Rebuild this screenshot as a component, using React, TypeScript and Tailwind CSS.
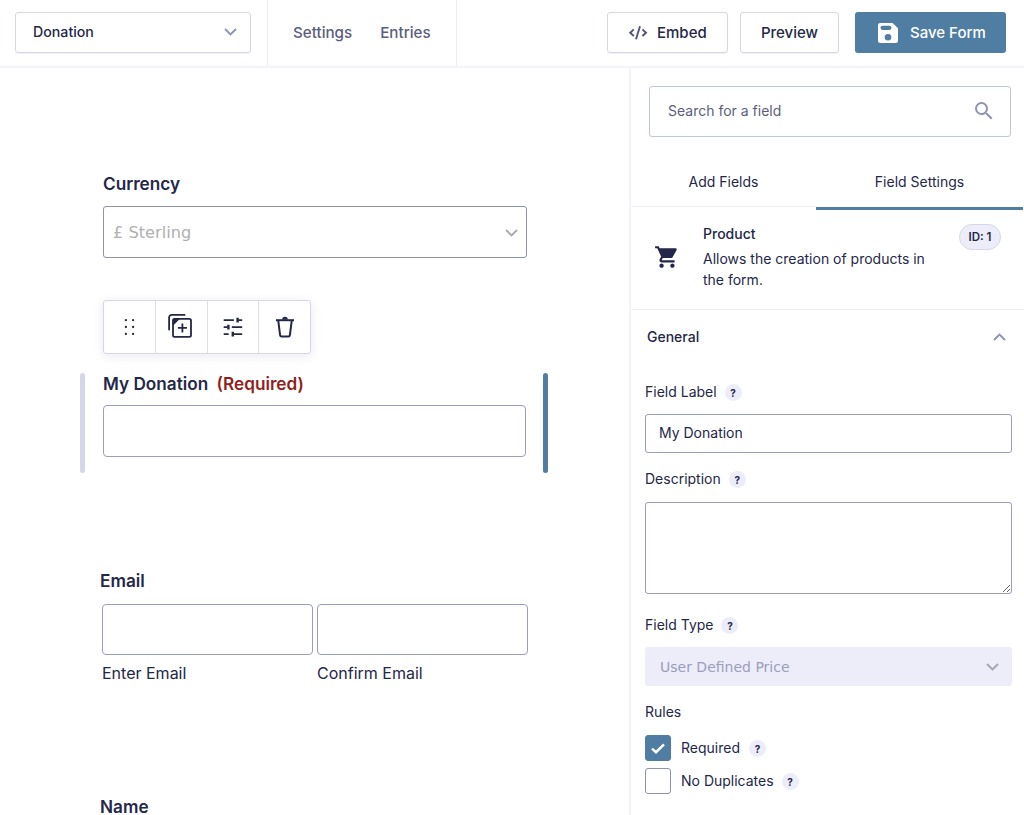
import React, { useState } from 'react';
import { MdSearch, MdShoppingCart } from 'react-icons/md';

interface ChevronProps {
  className?: string;
  up?: boolean;
}

function Chevron({ className, up = false }: ChevronProps) {
  return (
    <svg
      width="13"
      height="8"
      viewBox="0 0 13 8"
      fill="none"
      stroke="currentColor"
      strokeWidth="1.9"
      className={className}
    >
      <path d={up ? 'M1 7l5.5-5.4L12 7' : 'M1 1l5.5 5.4L12 1'} />
    </svg>
  );
}

function CodeIcon() {
  return (
    <svg width="20" height="16" viewBox="0 0 20 16" fill="none" stroke="#54527f" strokeWidth="1.9" className="mb-px shrink-0">
      <path d="M5.8 4.4L2.2 7.7l3.6 3.3M14.4 4.4L18 7.7l-3.6 3.3M12 1.2L8 14.2" />
    </svg>
  );
}

function SaveIcon() {
  return (
    <svg width="20" height="20" viewBox="0 0 20 20" className="mb-0.5 shrink-0">
      <path
        fill="#fff"
        fillRule="evenodd"
        d="M2.2 0h12.4L20 5.2v12.6a2.2 2.2 0 0 1-2.2 2.2H2.2A2.2 2.2 0 0 1 0 17.8V2.2A2.2 2.2 0 0 1 2.2 0zM4.6 2.7a2.1 2.1 0 0 0 0 4.2h6.8a2.1 2.1 0 0 0 0-4.2zM10 11a3.3 3.3 0 1 0 0 6.6 3.3 3.3 0 0 0 0-6.6z"
      />
    </svg>
  );
}

function DragIcon() {
  return (
    <svg width="24" height="24" viewBox="0 0 24 24" fill="#242748" className="ml-0.5">
      <circle cx="7.9" cy="5.2" r="1.15" />
      <circle cx="15.1" cy="5.2" r="1.15" />
      <circle cx="7.9" cy="12" r="1.15" />
      <circle cx="15.1" cy="12" r="1.15" />
      <circle cx="7.9" cy="18.9" r="1.15" />
      <circle cx="15.1" cy="18.9" r="1.15" />
    </svg>
  );
}

function DuplicateIcon() {
  return (
    <svg width="26" height="26" viewBox="0 0 26 26" fill="none" stroke="#242748" strokeWidth="1.8" className="mr-0.5 mb-0.5">
      <path d="M2.1 17.2V4.4a2.6 2.6 0 0 1 2.6-2.6h13.6" />
      <rect x="6" y="5.8" width="18" height="18" rx="1.6" />
      <path d="M15.4 10.4v9M10.9 14.9h9" />
      <path d="M6 5.8h7L6 12.8z" fill="#242748" stroke="none" />
    </svg>
  );
}

function SettingsIcon() {
  return (
    <svg width="24" height="24" viewBox="0 0 24 24" fill="none" stroke="#242748" strokeWidth="1.8">
      <path d="M2.7 5.2h10.2M16.2 5.2h5M2.7 12.2h4M10.8 12.2h10.4M2.7 19.2h5M11.5 19.2h9.7" />
      <path d="M16.6 2.8v4.8M7.4 9.8v4.8M11.8 16.8v4.8" strokeWidth="2.4" />
    </svg>
  );
}

function TrashIcon() {
  return (
    <svg width="22" height="24" viewBox="0 0 22 24" fill="none" stroke="#242748" strokeWidth="2" className="mb-px">
      <path d="M2 5.2h18" />
      <path d="M4.2 5.2l1.9 14.9a1.5 1.5 0 0 0 1.5 1.3h6.8a1.5 1.5 0 0 0 1.5-1.3l1.9-14.9" />
      <path d="M8.2 4.6a2.8 2.8 0 0 1 5.6 0z" fill="#242748" stroke="none" />
    </svg>
  );
}

function Help() {
  return (
    <span className="mt-px flex h-[17px] w-[17px] items-center justify-center rounded-full bg-[#ecedf8] text-[10px] leading-none font-bold">
      ?
    </span>
  );
}

const tools = [
  { name: 'drag', icon: <DragIcon /> },
  { name: 'duplicate', icon: <DuplicateIcon /> },
  { name: 'settings', icon: <SettingsIcon /> },
  { name: 'delete', icon: <TrashIcon /> },
];

function Header() {
  return (
    <header className="flex h-[68px] shrink-0 border-b-2 border-[#f3f3fb]">
      <div className="w-[267px] pt-3 pl-[15px]">
        <button className="flex h-[41px] w-[236px] items-center justify-between rounded-[3px] border border-[#d5d7e9] pr-[13px] pb-0.5 pl-[17px] text-[14.2px] font-medium shadow-[0_1px_1px_rgba(18,25,97,0.06)]">
          Donation
          <Chevron className="text-[#9092b2]" />
        </button>
      </div>
      <nav className="flex w-[190px] items-center gap-7 border-x border-[#ecedf8] pl-[25px] text-[15.2px] font-medium text-[#5b5e80]">
        <a>Settings</a>
        <a>Entries</a>
      </nav>
      <div className="ml-auto flex pt-3 pr-[18px] text-[15px] font-medium">
        <button className="flex h-[41px] w-[121px] items-center gap-[9px] rounded-[3px] border border-[#d5d7e9] pt-0.5 pl-5 shadow-[0_1px_1px_rgba(18,25,97,0.06)]">
          <CodeIcon />
          Embed
        </button>
        <button className="ml-3 h-[41px] w-[99px] rounded-[3px] border border-[#d5d7e9] pt-0.5 shadow-[0_1px_1px_rgba(18,25,97,0.06)]">
          Preview
        </button>
        <button className="ml-4 flex h-[41px] w-[151px] items-center gap-3 rounded-[3px] bg-[#507ea3] pt-0.5 pl-[23px] text-white">
          <SaveIcon />
          Save Form
        </button>
      </div>
    </header>
  );
}

function FormCanvas() {
  return (
    <main className="h-full w-[629px] shrink-0 pt-[104px]">
      <section className="ml-[103px] w-[424px]">
        <h3 className="text-[17.2px] leading-6 font-semibold">Currency</h3>
        <div className="mt-[10px] flex h-[52px] items-center justify-between rounded-[3px] border border-[#9092b2] pt-0.5 pr-2 pl-[9px] font-['DejaVu_Sans',sans-serif] text-[16.2px] text-[#b0b0b0]">
          £ Sterling
          <Chevron className="text-[#a8a8ae]" />
        </div>
      </section>

      {/* Actions for the selected field */}
      <div className="mt-[42px] ml-[103px] flex h-[54px] w-[208px] divide-x divide-[#dcdeee] rounded-[3px] border border-[#d5d7e9] bg-white shadow-[0_2px_12px_rgba(18,25,97,0.09)]">
        {tools.map((tool) => (
          <button key={tool.name} className="flex flex-1 items-center justify-center">
            {tool.icon}
          </button>
        ))}
      </div>

      <section className="mt-[19px] ml-20 flex h-[100px] w-[468px] gap-[18px]">
        <div className="w-[5px] shrink-0 rounded-full bg-[#d5d7e9]" />
        <div className="w-[423px] shrink-0">
          <h3 className="text-[17.2px] leading-[22px] font-semibold">
            My Donation <span className="ml-1 text-[#911f1b]">(Required)</span>
          </h3>
          <div className="mt-[10px] h-[52px] rounded-[4px] border border-[#9b9dbd]" />
        </div>
        <div className="-ml-px w-[5px] shrink-0 rounded-full bg-[#507ea3]" />
      </section>

      <section className="mt-24 ml-[100px]">
        <h3 className="text-[17.2px] leading-6 font-semibold">Email</h3>
        <div className="mt-[11px] ml-0.5 flex gap-1 text-base leading-6">
          <label className="w-[211px]">
            <div className="mb-[6px] h-[51px] rounded-[4px] border border-[#9b9dbd]" />
            Enter Email
          </label>
          <label className="w-[211px]">
            <div className="mb-[6px] h-[51px] rounded-[4px] border border-[#9b9dbd]" />
            Confirm Email
          </label>
        </div>
        <h3 className="mt-[111px] text-[17.2px] leading-[22px] font-semibold">Name</h3>
      </section>
    </main>
  );
}

function Sidebar() {
  const [required, setRequired] = useState(true);
  const [noDuplicates, setNoDuplicates] = useState(false);

  return (
    <aside className="flex-1 border-l-2 border-[#f3f3fb] text-[14px] leading-5">
      <div className="mt-[18px] ml-[18px] flex h-[51px] w-[362px] items-center justify-between rounded-[3px] border border-[#c3c5dc] pr-[14px] pb-px pl-[18px] text-[#5b5e80]">
        Search for a field
        <MdSearch className="h-6 w-6 text-[#9092b2]" />
      </div>

      {/* Tabs */}
      <div className="mt-[35px] flex h-[38px] text-center">
        <div className="h-[35px] w-[185px] border-b border-[#ecedf8]">Add Fields</div>
        <div className="w-[207px] border-b-[3px] border-[#507ea3]">Field Settings</div>
      </div>

      <div className="flex h-[100px] border-b border-[#ecedf8] pt-[14px] pl-[23px]">
        <MdShoppingCart className="mt-5 h-[26px] w-[26px] text-[#242748]" />
        <div className="-mt-px ml-[23px] w-[240px] leading-[21px]">
          <div className="font-medium">Product</div>
          <p className="mt-1">
            Allows the creation of products in
            <br />
            the form.
          </p>
        </div>
        <div className="ml-4 flex h-[26px] w-[42px] items-center justify-center rounded-full border border-[#d5d7e9] bg-[#ecedf8] text-[11.5px] font-semibold">
          ID: 1
        </div>
      </div>

      <div className="mt-[17px] ml-4 flex w-[359px] items-center justify-between font-medium">
        General
        <Chevron up className="text-[#9092b2]" />
      </div>

      <div className="ml-[14px] w-[367px]">
        <div className="mt-[35px] flex items-center gap-2">
          Field Label <Help />
        </div>
        <input
          defaultValue="My Donation"
          className="mt-3 block h-[39px] w-full rounded-[3px] border border-[#9b9dbd] px-[13px] pb-0.5 outline-none"
        />
        <div className="mt-4 flex items-center gap-2">
          Description <Help />
        </div>
        <textarea className="mt-[13px] block h-[92px] w-full rounded-[3px] border border-[#9b9dbd] outline-none" />
        <div className="mt-[21px] flex items-center gap-2">
          Field Type <Help />
        </div>
        <div className="mt-3 flex h-[39px] items-center justify-between rounded-[3px] bg-[#ecedf8] pr-[13px] pl-[15px] font-['DejaVu_Sans',sans-serif] text-[14px] text-[#9b9dbd]">
          User Defined Price
          <Chevron className="text-[#a3a4b3]" />
        </div>
        <div className="mt-4">Rules</div>
        <div className="mt-[13px] flex h-[26px] items-center">
          <button
            onClick={() => setRequired(!required)}
            className="mr-[10px] flex h-[26px] w-[26px] items-center justify-center rounded-[3px] border border-[#507ea3] bg-[#507ea3]"
          >
            {required && (
              <svg width="14" height="11" viewBox="0 0 14 11" fill="none" stroke="#fff" strokeWidth="2.5">
                <path d="M1 5.6l4 3.6L13 1.4" />
              </svg>
            )}
          </button>
          Required <span className="ml-[9px]"><Help /></span>
        </div>
        <div className="mt-[7px] flex h-[26px] items-center">
          <button
            onClick={() => setNoDuplicates(!noDuplicates)}
            className="mr-[10px] h-[26px] w-[26px] rounded-[3px] border border-[#9092b2] bg-white"
          />
          No Duplicates <span className="ml-2"><Help /></span>
        </div>
      </div>
    </aside>
  );
}

export default function App() {
  return (
    <div className="flex h-[815px] w-[1024px] flex-col overflow-hidden bg-white font-['Inter',sans-serif] text-[#242748]">
      <Header />
      <div className="flex min-h-0 flex-1">
        <FormCanvas />
        <Sidebar />
      </div>
    </div>
  );
}
